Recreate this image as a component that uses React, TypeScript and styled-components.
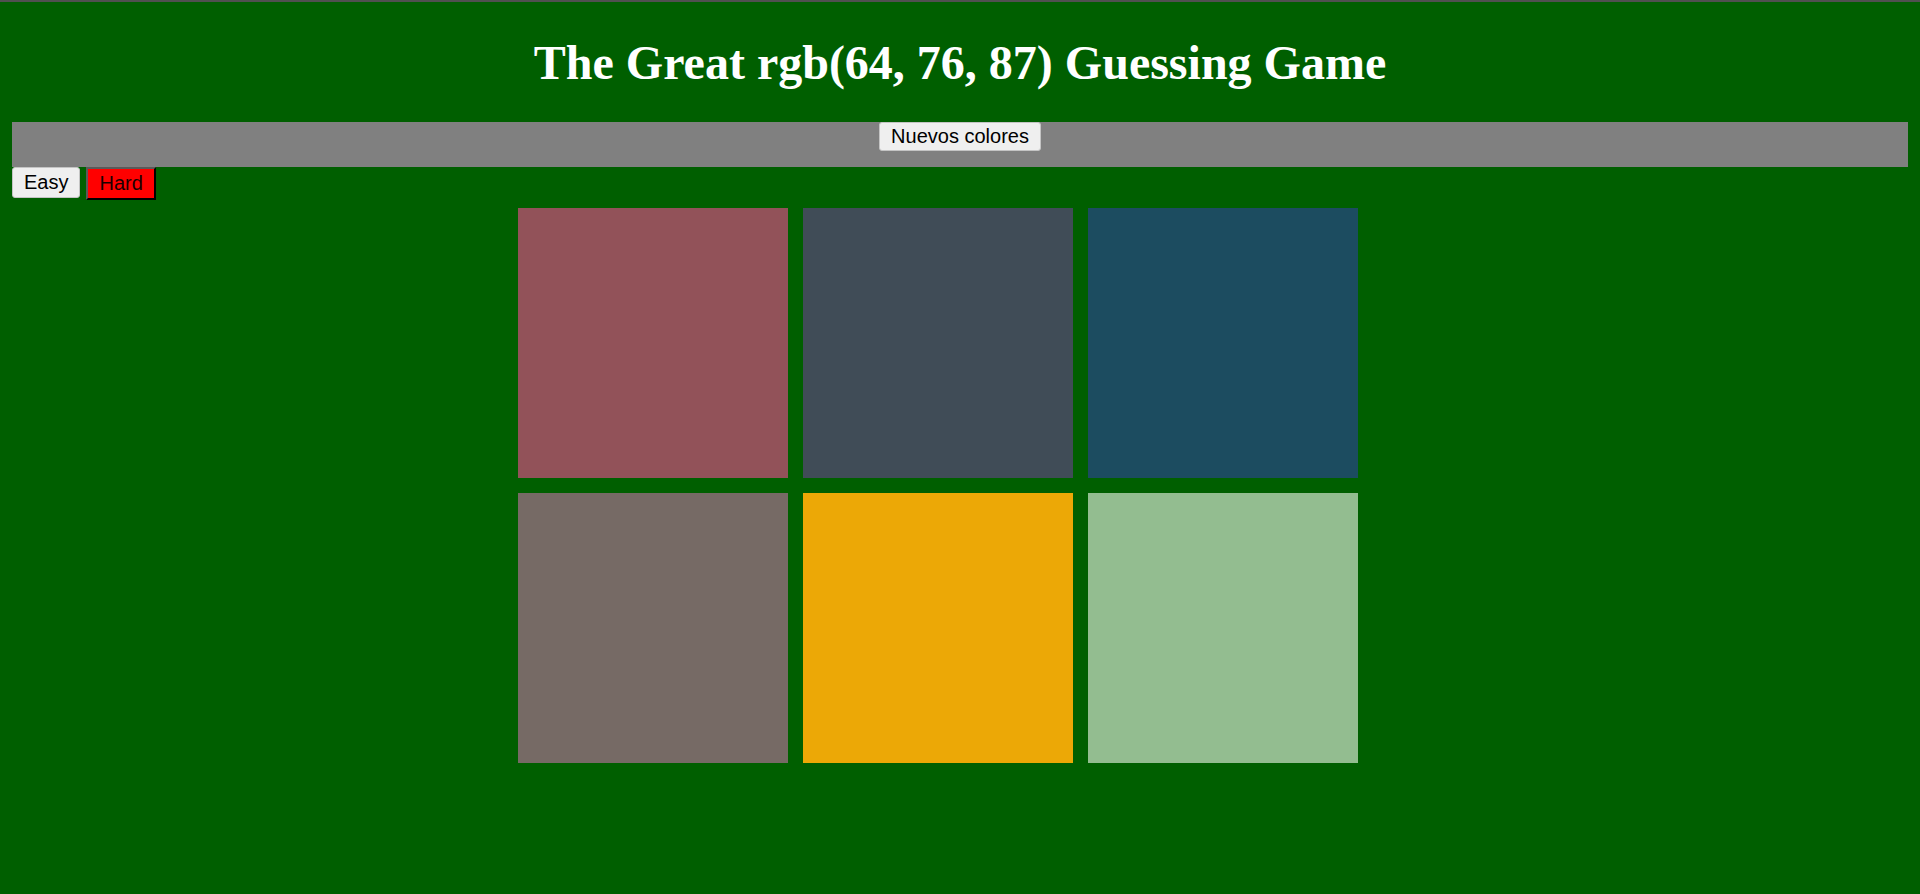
import React, { useState } from "react";
import styled, { createGlobalStyle, css } from "styled-components";

const GlobalStyle = createGlobalStyle`
  html, body {
    margin: 0;
    padding: 0;
  }
  body {
    background: #005f00;
    border-top: 2px solid #505050;
    min-height: 892px;
    font-family: "Liberation Serif", "Times New Roman", serif;
  }
`;

const Title = styled.h1`
  margin: 33px 0 31px;
  font-family: "Liberation Serif", "Times New Roman", serif;
  font-weight: bold;
  font-size: 48px;
  line-height: 56px;
  color: #ffffff;
  text-align: center;
`;

const Stripe = styled.div`
  margin: 0 12px;
  height: 45px;
  background: #808080;
  display: flex;
  justify-content: center;
  align-items: flex-start;
`;

const Button = styled.button<{ $active?: boolean }>`
  font-family: "Liberation Sans", Arial, sans-serif;
  font-size: 20px;
  line-height: 23px;
  color: #000;
  padding: 3px 11px;
  margin: 0;
  background: #efefef;
  border: 1px solid #c4c4c4;
  border-radius: 3px;
  cursor: pointer;
  ${(p) =>
    p.$active &&
    css`
      background: #ff0000;
      color: #1a0000;
      border: 2px solid;
      border-color: #5a5a5a #000 #000 #5a5a5a;
      border-radius: 0;
    `}
`;

const TopButton = styled(Button)`
  padding: 2px 11px;
`;

const Modes = styled.div`
  margin: 0 12px;
  display: flex;
  align-items: flex-start;
  gap: 6px;
`;

const Board = styled.div`
  width: 900px;
  margin: 0 auto;
  display: flex;
  flex-wrap: wrap;
`;

const Square = styled.div`
  width: 270px;
  height: 270px;
  margin: 7.5px;
`;

const colors = [
  "#925259",
  "#404c57",
  "#1c4c60",
  "#766a65",
  "#eca806",
  "#93bd90",
];

export default function App() {
  const [mode, setMode] = useState<"easy" | "hard">("hard");
  return (
    <>
      <GlobalStyle />
      <Title>The Great rgb(64, 76, 87) Guessing Game</Title>
      <Stripe>
        <TopButton>Nuevos colores</TopButton>
      </Stripe>
      <Modes>
        <Button $active={mode === "easy"} onClick={() => setMode("easy")}>
          Easy
        </Button>
        <Button $active={mode === "hard"} onClick={() => setMode("hard")}>
          Hard
        </Button>
      </Modes>
      <Board>
        {colors.map((c, i) => (
          <Square key={i} style={{ background: c }} />
        ))}
      </Board>
    </>
  );
}
